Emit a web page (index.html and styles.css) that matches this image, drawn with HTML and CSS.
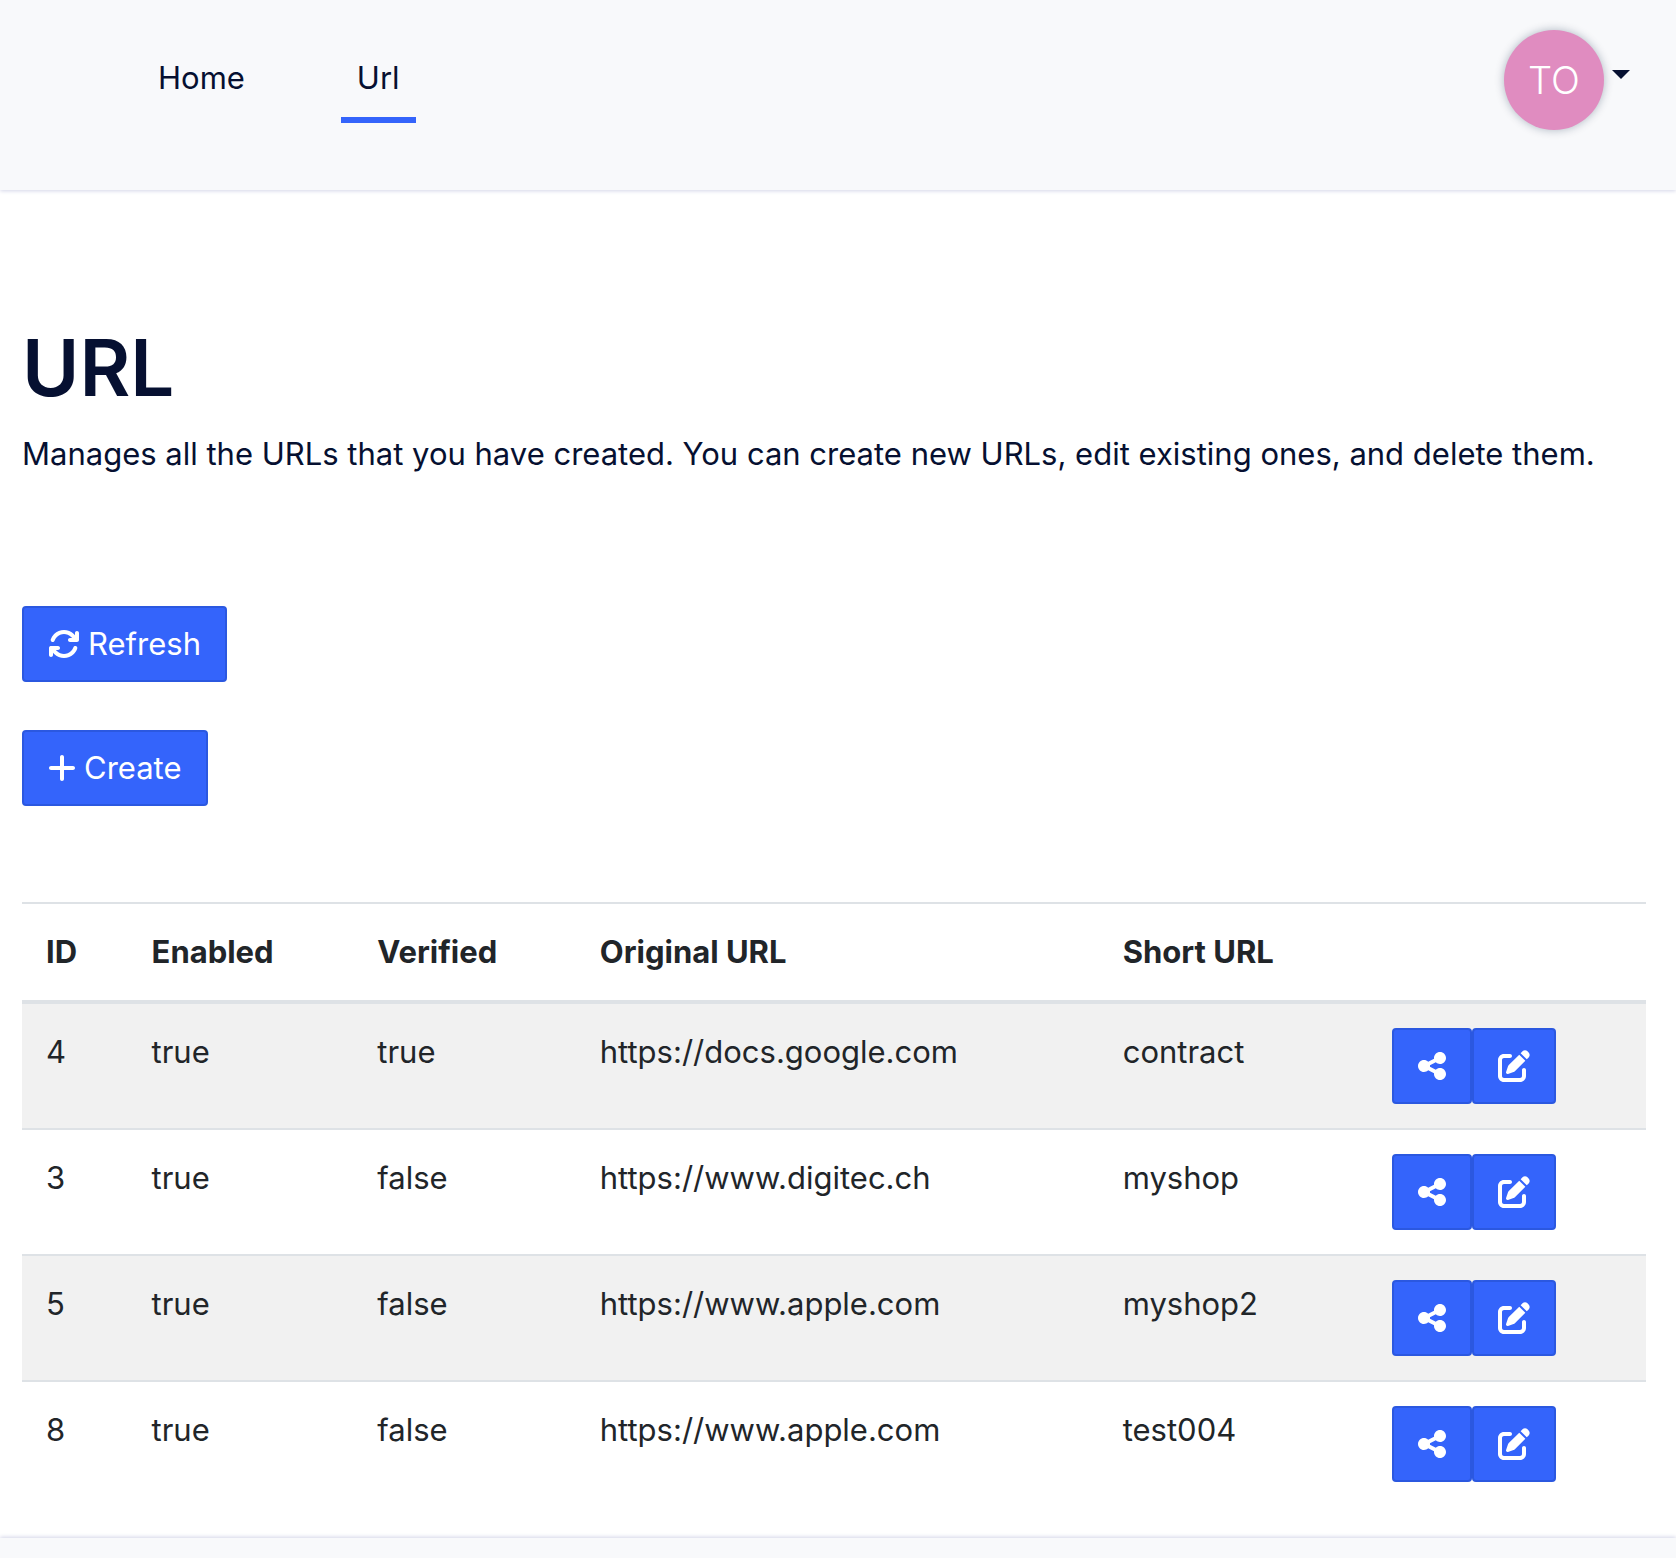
FILE: index.html
```html
<!DOCTYPE html>
<html lang="en">
<head>
<meta charset="utf-8">
<meta name="viewport" content="width=device-width, initial-scale=1">
<title>URL</title>
<link rel="stylesheet" href="styles.css">
</head>
<body>
<svg class="sprite" aria-hidden="true">
  <symbol id="icon-refresh" viewBox="0 0 512 512"><path d="M105.1 202.6c7.7-21.8 20.2-42.3 37.8-59.8c62.5-62.5 163.8-62.5 226.3 0L386.3 160H352c-17.7 0-32 14.3-32 32s14.3 32 32 32H463.5c0 0 0 0 0 0h.4c17.7 0 32-14.3 32-32V80c0-17.7-14.3-32-32-32s-32 14.3-32 32v35.2L414.4 97.6c-87.5-87.5-229.3-87.5-316.8 0C73.2 122 55.6 150.7 44.8 181.4c-5.9 16.7 2.9 34.9 19.5 40.8s34.9-2.9 40.8-19.5zM39 289.3c-5 1.5-9.8 4.2-13.7 8.2c-4 4-6.7 8.8-8.1 14c-.3 1.2-.6 2.5-.8 3.8c-.3 1.7-.4 3.4-.4 5.1V432c0 17.7 14.3 32 32 32s32-14.3 32-32V396.9l17.6 17.5 0 0c87.5 87.4 229.3 87.4 316.7 0c24.4-24.4 42.1-53.1 52.9-83.7c5.9-16.7-2.9-34.9-19.5-40.8s-34.9 2.9-40.8 19.5c-7.7 21.8-20.2 42.3-37.8 59.8c-62.5 62.5-163.8 62.5-226.3 0l-.1-.1L125.6 352H160c17.7 0 32-14.3 32-32s-14.3-32-32-32H48.4c-1.6 0-3.2 .1-4.8 .3s-3.1 .5-4.6 1z"/></symbol>
  <symbol id="icon-plus" viewBox="0 0 448 512"><path d="M256 80c0-17.7-14.3-32-32-32s-32 14.3-32 32V224H48c-17.7 0-32 14.3-32 32s14.3 32 32 32H192V432c0 17.7 14.3 32 32 32s32-14.3 32-32V288H400c17.7 0 32-14.3 32-32s-14.3-32-32-32H256V80z"/></symbol>
  <symbol id="icon-share" viewBox="0 0 448 512"><path d="M352 224c53 0 96-43 96-96s-43-96-96-96s-96 43-96 96c0 4 .2 8 .7 11.9l-94.1 47C145.4 170.2 121.9 160 96 160c-53 0-96 43-96 96s43 96 96 96c25.9 0 49.4-10.2 66.6-26.9l94.1 47c-.5 3.9-.7 7.8-.7 11.9c0 53 43 96 96 96s96-43 96-96s-43-96-96-96c-25.9 0-49.4 10.2-66.6 26.9l-94.1-47c.5-3.9 .7-7.8 .7-11.9s-.2-8-.7-11.9l94.1-47C302.6 213.8 326.1 224 352 224z"/></symbol>
  <symbol id="icon-edit" viewBox="0 0 512 512"><path d="M471.6 21.7c-21.9-21.9-57.3-21.9-79.2 0L362.3 51.7l97.9 97.9 30.1-30.1c21.9-21.9 21.9-57.3 0-79.2L471.6 21.7zm-299.2 220c-6.1 6.1-10.8 13.6-13.5 21.9l-29.6 88.8c-2.9 8.6-.6 18.1 5.8 24.6s15.9 8.7 24.6 5.8l88.8-29.6c8.2-2.7 15.7-7.4 21.9-13.5L437.7 172.3 339.7 74.3 172.4 241.7zM96 64C43 64 0 107 0 160V416c0 53 43 96 96 96H352c53 0 96-43 96-96V320c0-17.7-14.3-32-32-32s-32 14.3-32 32v96c0 17.7-14.3 32-32 32H96c-17.7 0-32-14.3-32-32V160c0-17.7 14.3-32 32-32h96c17.7 0 32-14.3 32-32s-14.3-32-32-32H96z"/></symbol>
</svg>

<header class="header">
  <nav class="nav">
    <a class="nav-link" href="#home">Home</a>
    <a class="nav-link active" href="#url" aria-current="page">Url</a>
  </nav>
  <button class="profile" type="button" aria-label="Account menu">
    <span class="avatar">TO</span>
    <span class="caret"></span>
  </button>
</header>

<main class="main">
  <h1 class="title">URL</h1>
  <p class="lead">Manages all the URLs that you have created. You can create new URLs, edit existing ones, and delete them.</p>

  <div class="actions">
    <button class="btn" type="button"><svg class="icon"><use href="#icon-refresh"/></svg>Refresh</button>
    <button class="btn" type="button"><svg class="icon narrow"><use href="#icon-plus"/></svg>Create</button>
  </div>

  <table class="table">
    <thead>
      <tr>
        <th class="col-id" scope="col">ID</th>
        <th class="col-enabled" scope="col">Enabled</th>
        <th class="col-verified" scope="col">Verified</th>
        <th class="col-original" scope="col">Original URL</th>
        <th class="col-short" scope="col">Short URL</th>
        <td class="col-actions"></td>
      </tr>
    </thead>
    <tbody>
      <tr>
        <td>4</td><td>true</td><td>true</td><td>https://docs.google.com</td><td>contract</td>
        <td><div class="btn-group">
          <button class="btn" type="button" aria-label="Share"><svg class="icon narrow"><use href="#icon-share"/></svg></button>
          <button class="btn" type="button" aria-label="Edit"><svg class="icon"><use href="#icon-edit"/></svg></button>
        </div></td>
      </tr>
      <tr>
        <td>3</td><td>true</td><td>false</td><td>https://www.digitec.ch</td><td>myshop</td>
        <td><div class="btn-group">
          <button class="btn" type="button" aria-label="Share"><svg class="icon narrow"><use href="#icon-share"/></svg></button>
          <button class="btn" type="button" aria-label="Edit"><svg class="icon"><use href="#icon-edit"/></svg></button>
        </div></td>
      </tr>
      <tr>
        <td>5</td><td>true</td><td>false</td><td>https://www.apple.com</td><td>myshop2</td>
        <td><div class="btn-group">
          <button class="btn" type="button" aria-label="Share"><svg class="icon narrow"><use href="#icon-share"/></svg></button>
          <button class="btn" type="button" aria-label="Edit"><svg class="icon"><use href="#icon-edit"/></svg></button>
        </div></td>
      </tr>
      <tr>
        <td>8</td><td>true</td><td>false</td><td>https://www.apple.com</td><td>test004</td>
        <td><div class="btn-group">
          <button class="btn" type="button" aria-label="Share"><svg class="icon narrow"><use href="#icon-share"/></svg></button>
          <button class="btn" type="button" aria-label="Edit"><svg class="icon"><use href="#icon-edit"/></svg></button>
        </div></td>
      </tr>
    </tbody>
  </table>
</main>

<footer class="footer"></footer>
</body>
</html>
```
FILE: styles.css
```css
* {
  box-sizing: border-box;
}

body {
  margin: 0;
  min-height: 100vh;
  display: flex;
  flex-direction: column;
  background: #fff;
  color: #212529;
  font: 400 31px/48px Inter, "Liberation Sans", sans-serif;
}

.sprite {
  display: none;
}

.header {
  display: flex;
  justify-content: space-between;
  align-items: flex-start;
  padding: 30px 46px 60px 142px;
  background: #f8f9fb;
  box-shadow: 0 1px 4px #d4d6e8;
}

.nav {
  display: flex;
  gap: 80px;
  padding-top: 24px;
}

.nav-link {
  padding: 0 16px 15px;
  border-bottom: 6px solid transparent;
  color: #061031;
  text-decoration: none;
}

.nav-link.active {
  border-color: #3464fb;
}

.profile {
  display: flex;
  align-items: center;
  gap: 8px;
  padding: 0;
  border: 0;
  background: none;
  color: #061031;
  font: inherit;
}

.avatar {
  display: grid;
  place-items: center;
  width: 100px;
  height: 100px;
  border-radius: 50%;
  background: #e08cc0;
  box-shadow: 0 0 10px rgba(6, 30, 60, .3);
  color: #fff;
  font-size: 38px;
  font-weight: 300;
}

.caret {
  margin-bottom: 12px;
  border: 9px solid transparent;
  border-top-color: currentColor;
  border-bottom: 0;
}

.main {
  padding: 136px 30px 32px 22px;
}

.title {
  margin: 0 0 20px;
  color: #061031;
  font-size: 78px;
  font-weight: 600;
  line-height: 84px;
}

.lead {
  margin: 0;
  color: #061031;
}

.actions {
  display: flex;
  flex-direction: column;
  align-items: flex-start;
  gap: 48px;
  padding: 128px 0 96px;
}

.btn {
  display: flex;
  align-items: center;
  gap: 8px;
  min-height: 76px;
  padding: 12px 24px;
  border: 2px solid #2b58e0;
  border-radius: 4px;
  background: #3464fb;
  color: #fff;
  font: inherit;
}

.icon {
  width: 32px;
  height: 32px;
  fill: currentColor;
}

.icon.narrow {
  width: 28px;
}

.btn-group {
  display: flex;
}

.table {
  width: 100%;
  table-layout: fixed;
  border-spacing: 0;
  border-top: 2px solid #dee2e6;
}

.table th,
.table td {
  padding: 24px;
  text-align: left;
  vertical-align: top;
}

.table thead th,
.table thead td {
  border-bottom: 4px solid #dee2e6;
}

.table th {
  font-weight: 700;
}

.table tbody tr + tr td {
  border-top: 2px solid #dee2e6;
}

.table tbody tr:nth-child(odd) {
  background: #f1f1f1;
}

.col-id { width: 6.5%; }
.col-enabled { width: 13.9%; }
.col-verified { width: 13.7%; }
.col-original { width: 32.2%; }
.col-short { width: 16.6%; }

.footer {
  flex: 1;
  background: #f8f9fb;
  box-shadow: 0 -1px 4px #d4d6e8;
}
```
